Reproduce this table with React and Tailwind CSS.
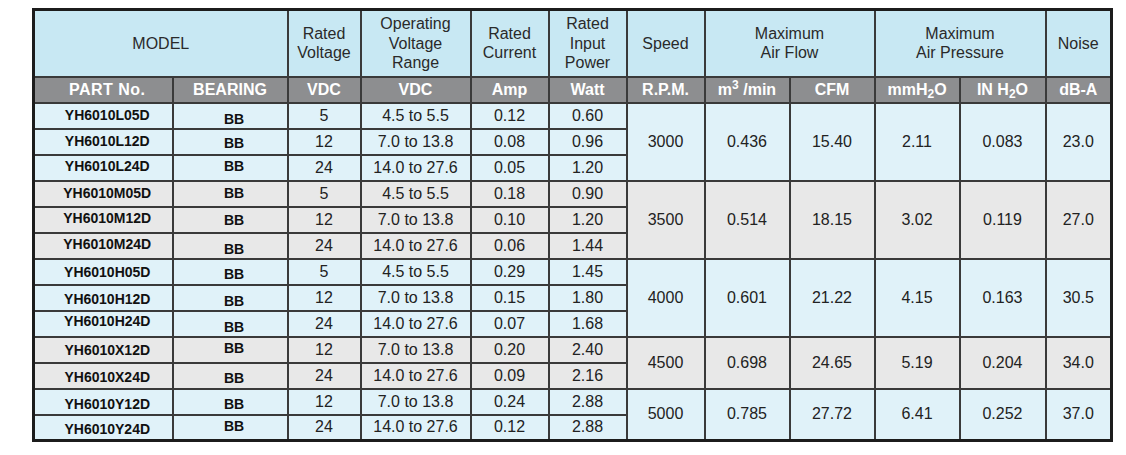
import React from "react";

const OFF = {
  "-3": "pb-[6px]",
  "-2": "pb-[4px]",
  "-1": "pb-[2px]",
  "0": "",
  "1": "pt-[2px]",
  "2": "pt-[4px]",
  "3": "pt-[6px]",
};

const groups = [
  {
    bg: "bg-[#e0f2f9]",
    speed: "3000", m3: "0.436", cfm: "15.40", mm: "2.11", inh: "0.083", noise: "23.0",
    rows: [
      ["YH6010L05D", "5", "4.5 to 5.5", "0.12", "0.60", -1, 3],
      ["YH6010L12D", "12", "7.0 to 13.8", "0.08", "0.96", -1, 1],
      ["YH6010L24D", "24", "14.0 to 27.6", "0.05", "1.20", -2, -2],
    ],
  },
  {
    bg: "bg-[#e8e8e8]",
    speed: "3500", m3: "0.514", cfm: "18.15", mm: "3.02", inh: "0.119", noise: "27.0",
    rows: [
      ["YH6010M05D", "5", "4.5 to 5.5", "0.18", "0.90", -1, -1],
      ["YH6010M12D", "12", "7.0 to 13.8", "0.10", "1.20", -2, 0],
      ["YH6010M24D", "24", "14.0 to 27.6", "0.06", "1.44", -2, 3],
    ],
  },
  {
    bg: "bg-[#e0f2f9]",
    speed: "4000", m3: "0.601", cfm: "21.22", mm: "4.15", inh: "0.163", noise: "30.5",
    rows: [
      ["YH6010H05D", "5", "4.5 to 5.5", "0.29", "1.45", 0, 2],
      ["YH6010H12D", "12", "7.0 to 13.8", "0.15", "1.80", 1, 3],
      ["YH6010H24D", "24", "14.0 to 27.6", "0.07", "1.68", -3, 3],
    ],
  },
  {
    bg: "bg-[#e8e8e8]",
    speed: "4500", m3: "0.698", cfm: "24.65", mm: "5.19", inh: "0.204", noise: "34.0",
    rows: [
      ["YH6010X12D", "12", "7.0 to 13.8", "0.20", "2.40", 0, -2],
      ["YH6010X24D", "24", "14.0 to 27.6", "0.09", "2.16", 1, 2],
    ],
  },
  {
    bg: "bg-[#e0f2f9]",
    speed: "5000", m3: "0.785", cfm: "27.72", mm: "6.41", inh: "0.252", noise: "37.0",
    rows: [
      ["YH6010Y12D", "12", "7.0 to 13.8", "0.24", "2.88", 2, 2],
      ["YH6010Y24D", "24", "14.0 to 27.6", "0.12", "2.88", 2, -1],
    ],
  },
];

const cell = "border-2 border-[#3a3a3a] text-center align-middle p-0";

export default function App() {
  return (
    <div className="w-[1126px] h-[455px] bg-white pt-[8px] pl-[32px] font-['Liberation_Sans',Arial,sans-serif] text-[#222]">
      <table className="table-fixed border-collapse border-[3px] border-[#1c1c1c] w-[1081px]">
        <colgroup>
          <col className="w-[139px]" />
          <col className="w-[115px]" />
          <col className="w-[73px]" />
          <col className="w-[110px]" />
          <col className="w-[78px]" />
          <col className="w-[78px]" />
          <col className="w-[78px]" />
          <col className="w-[85px]" />
          <col className="w-[85px]" />
          <col className="w-[85px]" />
          <col className="w-[86px]" />
          <col className="w-[66px]" />
        </colgroup>
        <thead>
          <tr className="h-[67px] bg-[#c8e8f3] text-[16px] leading-[19.5px] text-[#2a2a2a]">
            <th colSpan={2} className={`${cell} font-normal`}>MODEL</th>
            <th className={`${cell} font-normal`}>Rated<br />Voltage</th>
            <th className={`${cell} font-normal`}>Operating<br />Voltage<br />Range</th>
            <th className={`${cell} font-normal`}>Rated<br />Current</th>
            <th className={`${cell} font-normal`}>Rated<br />Input<br />Power</th>
            <th className={`${cell} font-normal`}>Speed</th>
            <th colSpan={2} className={`${cell} font-normal`}>Maximum<br />Air Flow</th>
            <th colSpan={2} className={`${cell} font-normal`}>Maximum<br />Air Pressure</th>
            <th className={`${cell} font-normal`}>Noise</th>
          </tr>
          <tr className="h-[26px] bg-[#8d8e90] text-white text-[16px] leading-[16px] font-bold">
            <th className={`${cell} pl-[8px] tracking-[0.5px]`}>PART No.</th>
            <th className={`${cell}`}>BEARING</th>
            <th className={cell}>VDC</th>
            <th className={cell}>VDC</th>
            <th className={cell}>Amp</th>
            <th className={cell}>Watt</th>
            <th className={cell}>R.P.M.</th>
            <th className={cell}>m<sup>3</sup> /min</th>
            <th className={cell}>CFM</th>
            <th className={cell}>mmH<sub>2</sub>O</th>
            <th className={cell}>IN H<sub>2</sub>O</th>
            <th className={cell}>dB-A</th>
          </tr>
        </thead>
        <tbody className="text-[16px] leading-[16px]">
          {groups.map((g) =>
            g.rows.map((r, i) => (
              <tr key={r[0]} className={`h-[26px] ${g.bg}`}>
                <td className={`${cell} pl-[8px] font-bold text-[14px] text-[#111] ${OFF[String(r[5])]}`}>{r[0]}</td>
                <td className={`${cell} pl-[8px] font-bold text-[14px] text-[#111] ${OFF[String(r[6])]}`}>BB</td>
                <td className={cell}>{r[1]}</td>
                <td className={cell}>{r[2]}</td>
                <td className={cell}>{r[3]}</td>
                <td className={cell}>{r[4]}</td>
                {i === 0 && (
                  <>
                    <td rowSpan={g.rows.length} className={cell}>{g.speed}</td>
                    <td rowSpan={g.rows.length} className={cell}>{g.m3}</td>
                    <td rowSpan={g.rows.length} className={cell}>{g.cfm}</td>
                    <td rowSpan={g.rows.length} className={cell}>{g.mm}</td>
                    <td rowSpan={g.rows.length} className={cell}>{g.inh}</td>
                    <td rowSpan={g.rows.length} className={cell}>{g.noise}</td>
                  </>
                )}
              </tr>
            ))
          )}
        </tbody>
      </table>
    </div>
  );
}
